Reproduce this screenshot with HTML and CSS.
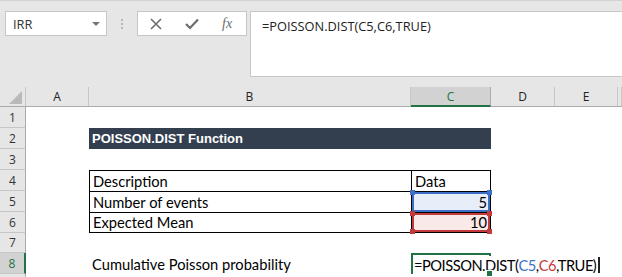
FILE: index.html
```html
<!DOCTYPE html>
<html lang="en">
<head>
    <meta charset="UTF-8">
    <title>POISSON.DIST</title>
    <link rel="stylesheet" href="styles.css">
</head>
<body>
    <div class="excel">
        <!-- barra de formula -->
        <div class="ribbon">
            <div class="namebox">
                <span>IRR</span>
                <span class="caret"></span>
            </div>
            <div class="grip"><i></i><i></i><i></i></div>
            <div class="fbuttons">
                <svg width="12" height="12" viewBox="0 0 12 12"><path d="M1 1 L11 11 M11 1 L1 11" stroke="#6d6d6d" stroke-width="1.6" fill="none"/></svg>
                <svg width="14" height="12" viewBox="0 0 14 12"><path d="M1 6 L5 10 L13 1.5" stroke="#6d6d6d" stroke-width="2.2" fill="none"/></svg>
                <span class="fx">fx</span>
            </div>
            <div class="formula">=POISSON.DIST(C5,C6,TRUE)</div>
        </div>

        <div class="sheet">
            <div class="row head">
                <div class="corner"><span class="tri"></span></div>
                <div class="col">A</div>
                <div class="col">B</div>
                <div class="col sel">C</div>
                <div class="col">D</div>
                <div class="col">E</div>
                <div class="col"></div>
            </div>

            <div class="row r21">
                <div class="num">1</div>
                <div class="cell"></div><div class="cell"></div><div class="cell"></div>
                <div class="cell"></div><div class="cell"></div><div class="cell"></div>
            </div>
            <div class="row r21">
                <div class="num">2</div>
                <div class="cell"></div>
                <div class="cell title">POISSON.DIST Function</div>
                <div class="cell"></div><div class="cell"></div><div class="cell"></div>
            </div>
            <div class="row r21">
                <div class="num">3</div>
                <div class="cell"></div><div class="cell"></div><div class="cell"></div>
                <div class="cell"></div><div class="cell"></div><div class="cell"></div>
            </div>
            <div class="row r21">
                <div class="num">4</div>
                <div class="cell"></div>
                <div class="cell bx">Description</div>
                <div class="cell bx br">Data</div>
                <div class="cell"></div><div class="cell"></div><div class="cell"></div>
            </div>
            <div class="row r21">
                <div class="num">5</div>
                <div class="cell"></div>
                <div class="cell bx">Number of events</div>
                <div class="cell bx br num-val ref-blue">5<i class="sq tl"></i><i class="sq tr"></i></div>
                <div class="cell"></div><div class="cell"></div><div class="cell"></div>
            </div>
            <div class="row r21">
                <div class="num">6</div>
                <div class="cell"></div>
                <div class="cell bx bb">Expected Mean</div>
                <div class="cell bx br bb num-val ref-red">10<i class="sq tl"></i><i class="sq tr"></i><i class="sq bl"></i><i class="sq brr"></i></div>
                <div class="cell"></div><div class="cell"></div><div class="cell"></div>
            </div>
            <div class="row r20">
                <div class="num">7</div>
                <div class="cell"></div><div class="cell"></div><div class="cell"></div>
                <div class="cell"></div><div class="cell"></div><div class="cell"></div>
            </div>
            <div class="row r21">
                <div class="num active">8</div>
                <div class="cell"></div>
                <div class="cell">Cumulative Poisson probability</div>
                <div class="cell editing">
                    <span class="edit">=POISSON.DIST(<b class="c-blue">C5</b>,<b class="c-red">C6</b>,TRUE)<span class="caret-line"></span></span>
                    <i class="handle"></i>
                </div>
                <div class="cell"></div><div class="cell"></div><div class="cell"></div>
            </div>
            <div class="row r21">
                <div class="num"></div>
                <div class="cell"></div><div class="cell"></div><div class="cell"></div>
                <div class="cell"></div><div class="cell"></div><div class="cell"></div>
            </div>
        </div>
    </div>
</body>
</html>
```

FILE: styles.css
```css
body {
    margin: 0;
    padding: 0;
    background: #fff;
}
.excel {
    width: 622px;
    height: 277px;
    overflow: hidden;
    background: #e6e6e6;
    font-family: "Open Sans", sans-serif;
}

/* barra de formula */
.ribbon {
    display: flex;
    align-items: flex-start;
    height: 76px;
    padding-top: 10px;
    border-top: 1px solid #d2d2d2;
    box-sizing: border-box;
}
.namebox {
    width: 102px;
    height: 25px;
    margin-left: 5px;
    box-sizing: border-box;
    border: 1px solid #c6c6c6;
    background: #fff;
    display: flex;
    align-items: center;
    justify-content: space-between;
    padding: 0 6px 0 7px;
    font-size: 12.8px;
    color: #333;
}
.caret {
    width: 0;
    height: 0;
    border-left: 4px solid transparent;
    border-right: 4px solid transparent;
    border-top: 4px solid #777;
}
.grip {
    width: 30px;
    height: 25px;
    display: flex;
    flex-direction: column;
    align-items: center;
    justify-content: center;
    gap: 2px;
}
.grip i {
    width: 2px;
    height: 2px;
    background: #b8b8b8;
}
.fbuttons {
    width: 110px;
    height: 25px;
    box-sizing: border-box;
    border: 1px solid #c6c6c6;
    background: #fff;
    display: flex;
    align-items: center;
    gap: 23px;
    padding-left: 12px;
}
.fx {
    font-family: "Liberation Serif", serif;
    font-style: italic;
    font-size: 14px;
    color: #6d6d6d;
}
.formula {
    flex: 1;
    height: 66px;
    margin-left: 3px;
    box-sizing: border-box;
    border: 1px solid #c6c6c6;
    border-right: none;
    background: #fff;
    padding: 5px 0 0 11px;
    font-size: 12.8px;
    color: #222;
}

/* planilha */
.sheet {
    margin-top: 11px;
}
.row {
    display: grid;
    grid-template-columns: 26px 63px 322px 80px 64px 63px 4px;
    background: #fff;
}
.r21 { height: 21px; }
.r20 { height: 20px; }

.head {
    height: 20px;
    background: #e6e6e6;
    border-bottom: 1px solid #ababab;
    box-sizing: border-box;
}
.corner {
    border-right: 1px solid #c6c6c6;
    position: relative;
}
.tri {
    position: absolute;
    right: 3px;
    bottom: 2px;
    width: 0;
    height: 0;
    border-left: 13px solid transparent;
    border-bottom: 13px solid #b9b9b9;
}
.col {
    border-right: 1px solid #c6c6c6;
    display: flex;
    align-items: center;
    justify-content: center;
    font-size: 12px;
    color: #222;
}
.col.sel {
    background: #d2d2d2;
    color: #217346;
    border-bottom: 2px solid #217346;
    border-right-color: #ababab;
    margin-bottom: -1px;
}

.num {
    background: #e6e6e6;
    border-right: 1px solid #ababab;
    border-bottom: 1px solid #c6c6c6;
    display: flex;
    align-items: center;
    justify-content: center;
    font-size: 12px;
    color: #333;
}
.num.active {
    background: #d2d2d2;
    color: #217346;
    border-right: 2px solid #217346;
}

.cell {
    box-sizing: border-box;
    display: flex;
    align-items: flex-end;
    padding: 0 3px 1px 3px;
    font-family: Lato, "Carlito", sans-serif;
    font-size: 14.7px;
    color: #000;
    white-space: nowrap;
    position: relative;
}
.title {
    grid-column: span 2;
    background: #333f4f;
    color: #fff;
    font-family: "Liberation Sans", Arial, sans-serif;
    font-weight: bold;
    font-size: 13px;
    align-items: center;
    padding-bottom: 0;
}
.bx {
    border-top: 1px solid #000;
    border-left: 1px solid #000;
}
.br { border-right: 1px solid #000; }
.bb { border-bottom: 1px solid #000; }
.num-val { justify-content: flex-end; }

/* referencias da formula */
.ref-blue {
    background: #e8eef9;
    box-shadow: inset 0 0 0 2px #3c70c8;
}
.ref-red {
    background: #f9e9e9;
    box-shadow: inset 0 0 0 2px #c33a3c;
}
.sq {
    position: absolute;
    width: 5px;
    height: 5px;
}
.ref-blue .sq { background: #3c70c8; }
.ref-red .sq { background: #c33a3c; }
.sq.tl { left: -2px; top: -2px; }
.sq.tr { right: -2px; top: -2px; }
.sq.bl { left: -2px; bottom: -2px; }
.sq.brr { right: -2px; bottom: -2px; }

/* celula em edicao */
.editing {
    border: 2px solid #217346;
    border-bottom: none;
    padding: 0 0 0 1px;
    align-items: center;
    overflow: visible;
}
.edit {
    background: #fff;
    padding-right: 2px;
    position: relative;
    z-index: 1;
    display: inline-flex;
    align-items: center;
    letter-spacing: -0.5px;
}
.edit b { font-weight: normal; }
.c-blue { color: #3c70c8; }
.c-red { color: #c33a3c; }
.caret-line {
    display: inline-block;
    width: 2px;
    height: 16px;
    background: #222;
    margin-left: 2px;
}
.handle {
    position: absolute;
    right: -4px;
    bottom: -3px;
    width: 5px;
    height: 5px;
    background: #217346;
    border: 1px solid #fff;
    z-index: 2;
}
```
